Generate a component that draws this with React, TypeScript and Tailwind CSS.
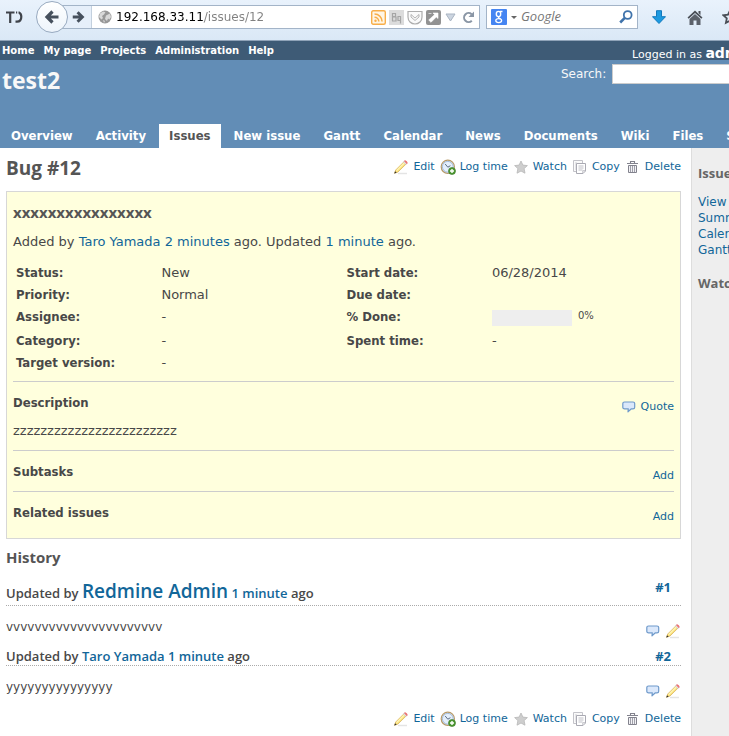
import type { ReactNode } from "react";

const link = "text-[#116699] hover:underline";

function PencilIcon() {
  return (
    <svg width="16" height="16" viewBox="0 0 16 16" className="shrink-0" aria-hidden="true">
      <path d="M5 14.500h9" stroke="#e4e4e4" strokeWidth="1.500" />
      <path d="M1.500 14.300l1.200-3.300L10.800 2.900l2.200 2.200-8.100 8z" fill="#fbe27a" stroke="#d3ab52" strokeWidth=".7" />
      <path d="M3.600 11.600l8.200-8.100" stroke="#fff6bd" strokeWidth="1.100" />
      <path d="M1.300 14.600l.8-2.400 1.600 1.600z" fill="#333" />
      <path d="M10.400 3l1-1 2.600 2.600-1 1z" fill="#e9e9ee" stroke="#b9b9c4" strokeWidth=".5" />
      <path d="M11.400 2.100c1-1.200 3.600.9 2.600 2.600z" fill="#f17474" stroke="#e86a6a" strokeWidth=".7" />
    </svg>
  );
}

function ClockIcon() {
  return (
    <svg width="16" height="16" viewBox="0 0 16 16" className="shrink-0" aria-hidden="true">
      <circle cx="7.800" cy="7.800" r="6.600" fill="#e4effc" stroke="#b89a68" strokeWidth="1.200" />
      <circle cx="7.800" cy="7.800" r="5.400" fill="none" stroke="#a3bbd9" strokeWidth="1" />
      <path d="M5.200 5l2.600 3.200 2.600-1.500" fill="none" stroke="#5d6d84" strokeWidth="1" />
      <circle cx="12" cy="12" r="3.500" fill="#4f9a35" stroke="#36751f" strokeWidth=".6" />
      <path d="M12 10v4M10 12h4" stroke="#fff" strokeWidth="1.400" />
    </svg>
  );
}

function StarIcon() {
  return (
    <svg width="16" height="16" viewBox="0 0 16 16" className="shrink-0" aria-hidden="true">
      <path
        d="M8 2l1.900 4.100 4.500.5-3.300 3 .9 4.600L8 12l-4 2.200.9-4.600-3.300-3 4.500-.5z"
        fill="#cecece"
        stroke="#b8b8b8"
        strokeWidth=".8"
      />
    </svg>
  );
}

function CopyIcon() {
  return (
    <svg width="16" height="16" viewBox="0 0 16 16" className="shrink-0" aria-hidden="true">
      <path d="M1.500 1.500h9v11h-9z" fill="#fafafa" stroke="#c3c3c9" />
      <path d="M3 4h2M3 6h1M3 8h1M3 10h1" stroke="#d0d0d6" />
      <path d="M4.500 4.500h9v7.500l-2.500 2.500H4.500z" fill="#fff" stroke="#aaaab3" />
      <path d="M6.500 7h5M6.500 9h5M6.500 11h4M10.800 14.400v-2.700h2.700" fill="none" stroke="#b8b8c0" strokeWidth=".9" />
    </svg>
  );
}

function TrashIcon() {
  return (
    <svg width="16" height="16" viewBox="0 0 16 16" className="shrink-0" aria-hidden="true">
      <path d="M2 4.500h11M5.500 4V2.500h4V4" fill="none" stroke="#82828d" strokeWidth="1.100" />
      <path d="M3.500 6.500v7h8v-7z" fill="#f2f2f5" stroke="#82828d" />
      <path d="M5.500 7v6M7.500 7v6M9.500 7v6" stroke="#9696a1" strokeWidth=".9" />
    </svg>
  );
}

function CommentIcon() {
  return (
    <svg width="16" height="16" viewBox="0 0 16 16" className="shrink-0" aria-hidden="true">
      <path
        d="M3.500 3h8.500c1.200 0 1.700.6 1.700 1.600v3.600c0 1-.6 1.600-1.700 1.600h-1.600L7 12.800l.3-3H3.600c-1.200 0-1.800-.6-1.800-1.600V4.600C1.800 3.600 2.400 3 3.500 3z"
        fill="#dbe8fb"
        stroke="#6f9acb"
        strokeWidth="1.200"
        strokeLinejoin="round"
      />
    </svg>
  );
}

function BrowserBar() {
  return (
    <div className="flex h-10 items-start overflow-hidden bg-linear-to-b from-[#e9f2fc] to-[#dae8f6] pt-[5px]">
      <button aria-label="Tab list" className="flex h-6 w-9 shrink-0 items-center pl-1.5">
        <svg width="17" height="12" viewBox="0 0 17 12" fill="none" stroke="#3f434a" strokeWidth="2.200" aria-hidden="true">
          <path d="M0 1.500h8.500M4.200 1.500V12M10 1.500h1.200M12.500 1.500h.5c1.500.8 2.300 2.200 2.300 4.300 0 3-1.800 4.900-4.300 4.900H9.500" />
        </svg>
      </button>
      <button
        aria-label="Back"
        className="z-10 -mt-[4px] flex size-8 shrink-0 items-center justify-center rounded-full border border-[#98aac0] bg-linear-to-b from-white to-[#edf4fb]"
      >
        <svg width="16" height="16" viewBox="0 0 16 16" fill="none" stroke="#46505d" strokeWidth="3.200" aria-hidden="true">
          <path d="M8.500 2.500L3 8l5.500 5.500M3 8h11.500" />
        </svg>
      </button>
      <div className="-ml-2 flex h-6 min-w-0 flex-1 items-center border border-[#a3b4c8] bg-white pr-1">
        <button
          aria-label="Forward"
          className="flex h-full w-[31px] shrink-0 items-center justify-end border-r border-[#c3d0de] bg-[#e6effa] pr-1.5"
        >
          <svg width="14" height="14" viewBox="0 0 16 16" fill="none" stroke="#46505d" strokeWidth="3.400" aria-hidden="true">
            <path d="M7.500 2.500L13 8l-5.500 5.500M13 8H2" />
          </svg>
        </button>
        <svg width="14" height="14" viewBox="0 0 14 14" className="mr-1 ml-1.5 shrink-0" aria-hidden="true">
          <circle cx="7" cy="7" r="6.500" fill="#989898" />
          <path d="M2 3.500l3-2 2.500.8L6 4.500 4 6l1 2-1.500 1.500L1 7zM8 5.500l4-2 1 3.500-1.500 2.500-1.500-1-1 2.500-2-2 .5-2zM5 10l2 1-1 2z" fill="#d8d8d8" />
        </svg>
        <input
          aria-label="Address"
          defaultValue="192.168.33.11/issues/12"
          className="min-w-0 flex-1 bg-[linear-gradient(to_right,#000000_88px,#808080_88px)] bg-clip-text text-[12px] text-transparent outline-none"
        />
        <div className="flex shrink-0 items-center gap-[3px]">
          <svg width="15" height="15" viewBox="0 0 15 15" fill="none" aria-hidden="true">
            <rect x=".7" y=".7" width="13.600" height="13.600" rx="1.500" fill="#fff6e6" stroke="#f8ae49" strokeWidth="1.400" />
            <path d="M3.500 7.300a4.300 4.300 0 014.300 4.300M3.500 4a7.600 7.600 0 017.600 7.600" stroke="#f8ae49" strokeWidth="1.600" />
            <circle cx="4.500" cy="10.700" r="1.200" fill="#f8ae49" />
          </svg>
          <svg width="15" height="15" viewBox="0 0 15 15" fill="none" stroke="#a6a6a6" aria-hidden="true">
            <rect width="15" height="15" fill="#dcdcdc" stroke="none" />
            <path d="M3.500 3v8M3 3.500h3.500v3H3M3 7h4v4H3" strokeWidth="1.200" />
            <path d="M12 6.500H9v4h3M11.500 6v7.500" strokeWidth="1.200" />
          </svg>
          <svg width="16" height="15" viewBox="0 0 16 15" fill="none" stroke="#adadad" strokeWidth="1.200" aria-hidden="true">
            <path d="M1 1.500h14v5.500c0 4-3 7-7 7s-7-3-7-7z" fill="#fafafa" />
            <path d="M4 4.500l4 3.500 4-3.500v2.500l-4 3.500L4 7z" strokeWidth=".9" />
          </svg>
          <svg width="15" height="15" viewBox="0 0 15 15" aria-hidden="true">
            <rect width="15" height="15" rx="2" fill="#929292" />
            <path d="M2.500 3.500h3M7 3h5v5.500L10.300 7 5 12.300 2.700 10 8.500 4.700z" fill="#fff" stroke="#fff" strokeWidth=".6" />
          </svg>
          <svg width="11" height="9" viewBox="0 0 11 9" className="ml-px" aria-hidden="true">
            <path d="M1 1h9L5.500 8z" fill="#ccd5e0" stroke="#a9b4c2" />
          </svg>
          <button aria-label="Reload" className="ml-[3px]">
            <svg width="13" height="13" viewBox="0 0 13 13" aria-hidden="true">
              <path d="M9.800 9.700A4.500 4.500 0 119.600 3.200" fill="none" stroke="#8a96a5" strokeWidth="2" />
              <path d="M12 .5v5.500H6.500z" fill="#8a96a5" />
            </svg>
          </button>
        </div>
      </div>
      <div className="ml-1.5 flex h-6 w-[152px] shrink-0 items-center border border-[#a3b4c8] bg-white px-1">
        <svg width="16" height="16" viewBox="0 0 16 16" fill="none" stroke="#fff" className="shrink-0" aria-hidden="true">
          <rect width="16" height="16" rx="1" fill="#4585f2" stroke="none" />
          <ellipse cx="7.500" cy="5" rx="2.200" ry="2.600" strokeWidth="1.400" />
          <path d="M9 2.500h2.500M8 7.500c-1.500 1 .2 1.500 1.500 2.500" strokeWidth="1.300" />
          <ellipse cx="7.700" cy="11.600" rx="2.900" ry="2" strokeWidth="1.300" />
        </svg>
        <svg width="6" height="3" viewBox="0 0 6 3" className="mx-1 shrink-0" aria-hidden="true">
          <path d="M0 0h6L3 3z" fill="#666" />
        </svg>
        <input
          type="text"
          aria-label="Web search"
          placeholder="Google"
          className="w-0 min-w-0 flex-1 font-['Open_Sans',sans-serif] text-[13px] italic outline-none placeholder:text-[#777777]"
        />
        <button aria-label="Search the web">
          <svg width="14" height="14" viewBox="0 0 14 14" fill="none" stroke="#3f73ab" aria-hidden="true">
            <circle cx="8.700" cy="5" r="3.900" strokeWidth="1.800" />
            <path d="M5.800 7.900L1.200 12.500" strokeWidth="2.600" />
          </svg>
        </button>
      </div>
      <div className="flex h-6 w-[91px] shrink-0 items-center overflow-hidden">
        <button aria-label="Downloads" className="ml-3.5 shrink-0">
          <svg width="14" height="14" viewBox="0 0 14 14" aria-hidden="true">
            <path d="M4.500.7h5v6h4L7 13.500.5 6.700h4z" fill="#1d9ae0" stroke="#1279bd" />
          </svg>
        </button>
        <button aria-label="Home page" className="ml-[21px] shrink-0">
          <svg width="16" height="15" viewBox="0 0 16 15" aria-hidden="true">
            <path d="M8 .5l7.500 7-1.200 1.200L8 3 1.700 8.700.5 7.500zM11.500 1h2v4l-2-2z" fill="#4a4f57" />
            <path d="M2.500 9L8 4l5.500 5v6H9.500v-4.500h-3V15h-4z" fill="#5b616a" />
          </svg>
        </button>
        <button aria-label="Bookmark" className="ml-[19px] shrink-0">
          <svg width="16" height="16" viewBox="0 0 16 16" fill="none" stroke="#4a4f57" strokeWidth="1.800" aria-hidden="true">
            <path d="M8 1.500l2 4.200 4.500.6-3.300 3.100.9 4.500L8 11.700l-4.100 2.200.9-4.500L1.500 6.300 6 5.700z" />
          </svg>
        </button>
      </div>
    </div>
  );
}

function TopMenu() {
  return (
    <div className="flex h-[19px] items-center justify-between overflow-hidden bg-[#3e5b76] pl-0.5 text-white">
      <nav aria-label="Account" className="flex gap-[9px] text-[10px] leading-4 font-bold">
        {["Home", "My page", "Projects", "Administration", "Help"].map((label) => (
          <a key={label} href="#" className="hover:underline">
            {label}
          </a>
        ))}
      </nav>
      <div className="h-5 w-[97px] shrink-0 overflow-hidden pt-0.5 text-[11px] leading-5">
        Logged in as{" "}
        <a href="#" className="text-[14px] font-bold">
          admin
        </a>
      </div>
    </div>
  );
}

const tabs = ["Overview", "Activity", "Issues", "New issue", "Gantt", "Calendar", "News", "Documents", "Wiki", "Files", "Settings"];

function Header() {
  return (
    <header className="flex h-[88px] flex-col justify-between overflow-hidden bg-[#628db6] text-[#f8f8f8]">
      <div className="flex items-start justify-between pt-1 pl-0.5">
        <h1 className="font-['Open_Sans',sans-serif] text-[23px] leading-8 font-bold">test2</h1>
        <form className="flex w-[168px] shrink-0 items-center gap-1.5 overflow-hidden text-[12px]">
          <label htmlFor="q">Search:</label>
          <input id="q" type="text" className="h-5 w-40 shrink-0 border border-[#cccccc] bg-white px-1 text-[#484848]" />
        </form>
      </div>
      <nav aria-label="Project" className="flex gap-[3px] pl-px font-['DejaVu_Sans_Condensed','DejaVu_Sans',sans-serif] text-[13px] leading-6 font-bold">
        {tabs.map((label) => (
          <a
            key={label}
            href="#"
            className={label === "Issues" ? "bg-white px-2.5 text-[#555555]" : "px-2.5 text-white"}
          >
            {label}
          </a>
        ))}
      </nav>
    </header>
  );
}

function Action({ icon, children }: { icon: ReactNode; children: ReactNode }) {
  return (
    <a href="#" className={`flex items-center gap-1 ${link}`}>
      {icon}
      {children}
    </a>
  );
}

function Actions() {
  return (
    <div className="flex gap-[5px] text-[11px] leading-4">
      <Action icon={<PencilIcon />}>Edit</Action>
      <Action icon={<ClockIcon />}>Log time</Action>
      <Action icon={<StarIcon />}>Watch</Action>
      <Action icon={<CopyIcon />}>Copy</Action>
      <Action icon={<TrashIcon />}>Delete</Action>
    </div>
  );
}

const attributes: [string, ReactNode, string, ReactNode][] = [
  ["Status:", "New", "Start date:", "06/28/2014"],
  ["Priority:", "Normal", "Due date:", ""],
  [
    "Assignee:",
    "-",
    "% Done:",
    <div className="flex h-5 gap-1.5 pt-0.5">
      <div className="h-4 w-20 bg-[#eeeeee]" />
      <span className="text-[10px] leading-3">0%</span>
    </div>,
  ],
  ["Category:", "-", "Spent time:", "-"],
  ["Target version:", "-", "", ""],
];

function Attributes() {
  return (
    <table className="mt-2.5 w-full table-fixed text-left text-[13px] leading-[18px]">
      <tbody>
        {attributes.map(([a, b, c, d]) => (
          <tr key={a} className="align-top">
            <th className="w-[22%] px-[3px] py-0.5 font-['DejaVu_Sans_Condensed','DejaVu_Sans',sans-serif]">{a}</th>
            <td className="w-[28%] px-[3px] py-0.5">{b}</td>
            <th className="w-[22%] px-[3px] py-0.5 font-['DejaVu_Sans_Condensed','DejaVu_Sans',sans-serif]">{c}</th>
            <td className="w-[28%] px-[3px] py-0.5">{d}</td>
          </tr>
        ))}
      </tbody>
    </table>
  );
}

function SectionHead({ title, children }: { title: string; children: ReactNode }) {
  return (
    <div className="flex items-start justify-between border-t border-[#cccccc] pt-3">
      <h3 className="font-['DejaVu_Sans_Condensed','DejaVu_Sans',sans-serif] text-[13px] leading-[18px] font-bold">{title}</h3>
      <div className="pt-[5px] text-[11px] leading-4">{children}</div>
    </div>
  );
}

function Journal({ id, author, big, note }: { id: number; author: string; big?: boolean; note: string }) {
  return (
    <article>
      <h4
        className={`flex justify-between border-b border-dotted border-[#aaaaaa] pr-2.5 font-['Open_Sans',sans-serif] text-[13px] font-semibold ${big ? "h-[33px] leading-7" : "h-5 leading-5"}`}
      >
        <span className={big ? "self-end leading-6" : ""}>
          Updated by{" "}
          <a href="#" className={big ? `text-[19px] ${link}` : link}>
            {author}
          </a>{" "}
          <a href="#" className={link}>
            1 minute
          </a>{" "}
          ago
        </span>
        <a href="#" className={`font-bold ${link}`}>
          #{id}
        </a>
      </h4>
      <div className="flex h-10 items-start justify-between pt-3">
        <p className="text-[12px] leading-[18px]">{note}</p>
        <div className="flex gap-1 pt-[5px]">
          <a href="#" aria-label="Quote">
            <CommentIcon />
          </a>
          <a href="#" aria-label="Edit note">
            <PencilIcon />
          </a>
        </div>
      </div>
    </article>
  );
}

export default function App() {
  return (
    <div className="flex min-h-screen flex-col overflow-hidden bg-white font-['DejaVu_Sans',sans-serif] text-[12px] whitespace-nowrap text-[#484848]">
      <BrowserBar />
      <div className="h-px bg-[#8fa3b8]" />
      <TopMenu />
      <Header />
      <div className="flex flex-1">
        <main className="min-w-0 flex-1 pr-2.5 pl-1.5">
          <div className="flex h-[43px] items-start justify-between pt-1.5">
            <h2 className="font-['Open_Sans',sans-serif] text-[19px] leading-7 font-bold text-[#555555]">Bug #12</h2>
            <div className="pt-[5px]">
              <Actions />
            </div>
          </div>
          <section className="border border-[#d7d7d7] bg-[#ffffdd] px-1.5 pb-[13px]">
            <h3 className="pt-2.5 font-['Open_Sans',sans-serif] text-[15px] leading-5 font-bold text-[#555555]">xxxxxxxxxxxxxxxx</h3>
            <p className="pt-2.5 text-[13px] leading-5">
              Added by{" "}
              <a href="#" className={link}>
                Taro Yamada
              </a>{" "}
              <a href="#" className={link}>
                2 minutes
              </a>{" "}
              ago. Updated{" "}
              <a href="#" className={link}>
                1 minute
              </a>{" "}
              ago.
            </p>
            <Attributes />
            <div className="mt-[7px] h-[69px]">
              <SectionHead title="Description">
                <Action icon={<CommentIcon />}>Quote</Action>
              </SectionHead>
              <p className="pt-1.5 text-[13px] leading-5">zzzzzzzzzzzzzzzzzzzzzzzz</p>
            </div>
            <div className="h-[41px]">
              <SectionHead title="Subtasks">
                <a href="#" className={link}>
                  Add
                </a>
              </SectionHead>
            </div>
            <SectionHead title="Related issues">
              <a href="#" className={link}>
                Add
              </a>
            </SectionHead>
          </section>
          <h3 className="pt-2 pb-1.5 font-['Open_Sans',sans-serif] text-[15px] leading-5 font-bold text-[#555555]">History</h3>
          <Journal id={1} author="Redmine Admin" big note="vvvvvvvvvvvvvvvvvvvvvv" />
          <Journal id={2} author="Taro Yamada" note="yyyyyyyyyyyyyyy" />
          <div className="flex justify-end pt-[5px]">
            <Actions />
          </div>
        </main>
        <aside className="w-[38px] shrink-0 overflow-hidden border-l border-[#dddddd] bg-[#eeeeee] pt-4 pl-1.5">
          <h3 className="font-['Open_Sans',sans-serif] text-[13px] leading-[18px] font-bold text-[#666666]">Issues</h3>
          <ul className="pt-3 text-[12px] leading-4">
            {["View all issues", "Summary", "Calendar", "Gantt"].map((label) => (
              <li key={label}>
                <a href="#" className={link}>
                  {label}
                </a>
              </li>
            ))}
          </ul>
          <h3 className="pt-4 font-['Open_Sans',sans-serif] text-[13px] leading-[18px] font-bold text-[#666666]">Watchers (0)</h3>
        </aside>
      </div>
    </div>
  );
}
